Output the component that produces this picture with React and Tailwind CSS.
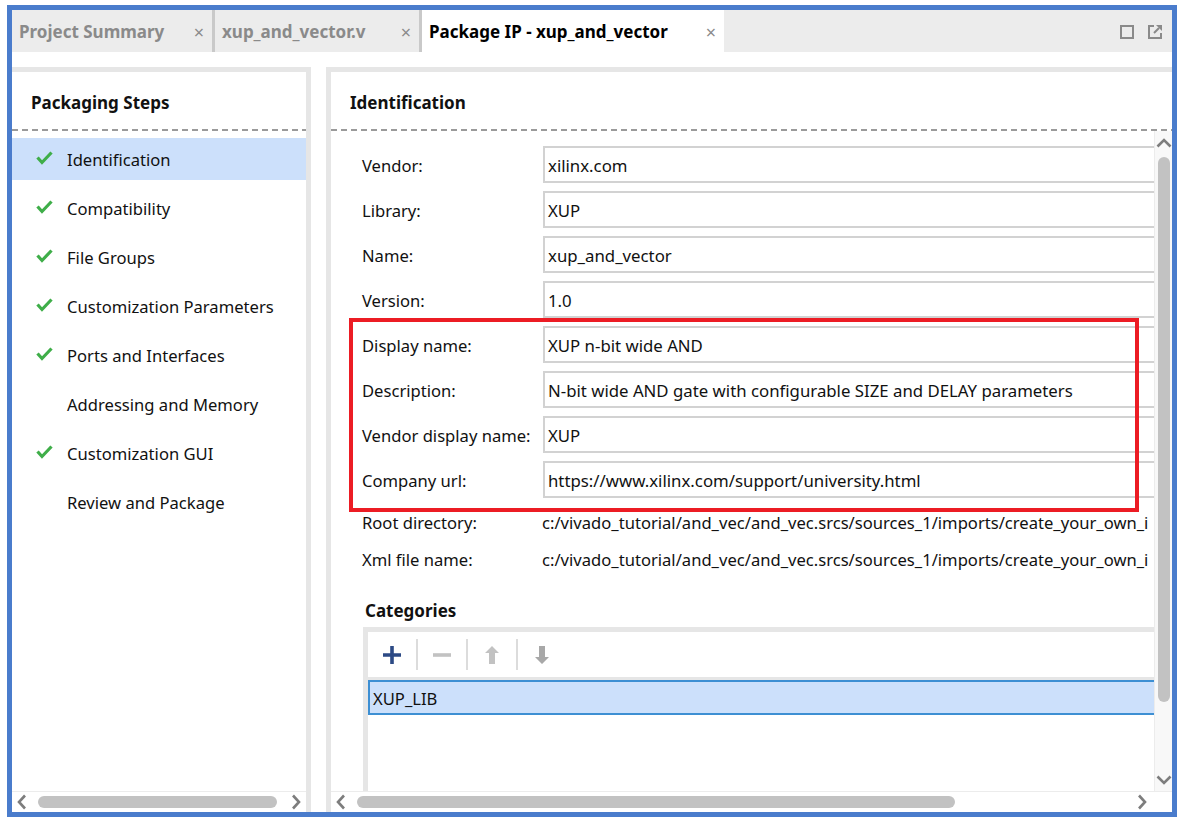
import React from "react";

const FONT = { fontFamily: '"Noto Sans", "Open Sans", sans-serif' };

function Check() {
  return (
    <svg width="17" height="14" viewBox="0 0 17 14" className="shrink-0">
      <path d="M1.5 6.5 L6 11.5 L15.5 1.5" fill="none" stroke="#3fae49" strokeWidth="3.2" strokeLinecap="butt" strokeLinejoin="miter" />
    </svg>
  );
}

function ChevronLeft() {
  return (
    <svg width="10" height="16" viewBox="0 0 10 16">
      <path d="M8 1.5 L2 8 L8 14.5" fill="none" stroke="#7d7d7d" strokeWidth="2.6" />
    </svg>
  );
}
function ChevronRight() {
  return (
    <svg width="10" height="16" viewBox="0 0 10 16">
      <path d="M2 1.5 L8 8 L2 14.5" fill="none" stroke="#7d7d7d" strokeWidth="2.6" />
    </svg>
  );
}
function ChevronUp() {
  return (
    <svg width="16" height="10" viewBox="0 0 16 10">
      <path d="M1.5 8.5 L8 2 L14.5 8.5" fill="none" stroke="#7d7d7d" strokeWidth="2.6" />
    </svg>
  );
}
function ChevronDown() {
  return (
    <svg width="16" height="10" viewBox="0 0 16 10">
      <path d="M1.5 1.5 L8 8 L14.5 1.5" fill="none" stroke="#7d7d7d" strokeWidth="2.6" />
    </svg>
  );
}

function Tab({ label, active, width }) {
  return (
    <div
      className={
        "h-full flex items-center shrink-0 pl-[7px] pr-[8px] pt-[2px] justify-between " +
        (active ? "bg-white text-black" : "text-[#8a8a8a]")
      }
      style={{ width }}
    >
      <span className="font-bold text-[17px] whitespace-nowrap">{label}</span>
      <span className="text-[#8a8a8a] text-[18px] leading-none">×</span>
    </div>
  );
}

const steps = [
  ["Identification", true, true],
  ["Compatibility", true, false],
  ["File Groups", true, false],
  ["Customization Parameters", true, false],
  ["Ports and Interfaces", true, false],
  ["Addressing and Memory", false, false],
  ["Customization GUI", true, false],
  ["Review and Package", false, false],
];

const fields = [
  ["Vendor:", "xilinx.com"],
  ["Library:", "XUP"],
  ["Name:", "xup_and_vector"],
  ["Version:", "1.0"],
  ["Display name:", "XUP n-bit wide AND"],
  ["Description:", "N-bit wide AND gate with configurable SIZE and DELAY parameters"],
  ["Vendor display name:", "XUP"],
  ["Company url:", "https://www.xilinx.com/support/university.html"],
];

const rootDir = "c:/vivado_tutorial/and_vec/and_vec.srcs/sources_1/imports/create_your_own_i";
const xmlFile = "c:/vivado_tutorial/and_vec/and_vec.srcs/sources_1/imports/create_your_own_i";

function Dashed() {
  return <div className="h-[2px] shrink-0 bg-[repeating-linear-gradient(90deg,#9a9a9a_0_6px,transparent_6px_10px)]" />;
}

export default function App() {
  return (
    <div className="w-[1180px] h-[823px] bg-white relative overflow-hidden text-[#111]" style={FONT}>
      <div className="ml-[7px] mt-[5px] w-[1170px] h-[812px] border-[5px] border-[#4a7ccc] flex flex-col bg-white">
        {/* Tab bar */}
        <div className="h-[42px] shrink-0 bg-[#ececec] flex items-stretch">
          <Tab label="Project Summary" width={200} />
          <div className="w-[3px] bg-[#c9c9c9] shrink-0" />
          <Tab label="xup_and_vector.v" width={204} />
          <div className="w-[3px] bg-[#c9c9c9] shrink-0" />
          <Tab label="Package IP - xup_and_vector" active width={302} />
          <div className="flex-1 flex items-center justify-end gap-[14px] pr-[10px] pt-[2px]">
            <svg width="14" height="14" viewBox="0 0 14 14">
              <rect x="1" y="1" width="12" height="12" fill="none" stroke="#8a8a8a" strokeWidth="2" />
            </svg>
            <svg width="14" height="14" viewBox="0 0 14 14">
              <path d="M6 1 H1 V13 H13 V8" fill="none" stroke="#8a8a8a" strokeWidth="2" />
              <path d="M6 8 L11 3" fill="none" stroke="#8a8a8a" strokeWidth="2" />
              <path d="M8 0 H14 V6 Z" fill="#8a8a8a" />
            </svg>
          </div>
        </div>
        <div className="h-[15px] shrink-0" />
        {/* Main */}
        <div className="flex-1 flex min-h-0">
          {/* Left panel */}
          <div className="w-[299px] shrink-0 border-t-[5px] border-r-[5px] border-[#e6e6e6] flex flex-col">
            <div className="h-[57px] shrink-0 flex items-center pl-[19px] pt-[4px]">
              <span className="font-bold text-[17px]">Packaging Steps</span>
            </div>
            <Dashed />
            <div className="flex flex-col gap-[7px] pt-[7px]">
              {steps.map(([name, done, sel]) => (
                <div
                  key={name}
                  className={"h-[42px] flex items-center " + (sel ? "bg-[#cce0fb]" : "")}
                >
                  <div className="w-[55px] pl-[24px] flex items-center pb-[3px]">{done && <Check />}</div>
                  <span className="text-[16.6px] whitespace-nowrap pt-[3px]">{name}</span>
                </div>
              ))}
            </div>
            <div className="flex-1" />
            <div className="h-[21px] shrink-0 border-t border-[#ececec] flex items-center justify-between px-[5px] relative">
              <ChevronLeft />
              <div className="absolute left-[26px] top-[4px] w-[239px] h-[12px] rounded-full bg-[#c2c2c2]" />
              <ChevronRight />
            </div>
          </div>
          <div className="w-[15px] shrink-0" />
          {/* Right panel */}
          <div className="flex-1 min-w-0 border-t-[5px] border-l-[5px] border-[#e6e6e6] flex flex-col">
            <div className="h-[57px] shrink-0 flex items-center pl-[19px] pt-[4px]">
              <span className="font-bold text-[17px]">Identification</span>
            </div>
            <Dashed />
            <div className="flex-1 min-h-0 flex">
              {/* form area */}
              <div className="flex-1 min-w-0 overflow-hidden flex flex-col pl-[31px] pt-[15px]">
                <div className="flex flex-col gap-[8px]">
                  {fields.map(([label, value]) => (
                    <div key={label} className="flex items-center h-[37px] shrink-0">
                      <div className="w-[181px] shrink-0 text-[16.6px] whitespace-nowrap pt-[3px]">{label}</div>
                      <div className="flex-1 h-full border-2 border-r-0 border-[#d2d2d2] flex items-center pl-[3px] pt-[3px] text-[16.8px] whitespace-nowrap overflow-hidden">
                        {value}
                      </div>
                    </div>
                  ))}
                </div>
                <div className="mt-[6px] flex flex-col">
                  {[
                    ["Root directory:", rootDir],
                    ["Xml file name:", xmlFile],
                  ].map(([l, v]) => (
                    <div key={l} className="h-[37px] flex items-center shrink-0 pt-[2px]">
                      <div className="w-[180px] shrink-0 text-[16.6px] whitespace-nowrap">{l}</div>
                      <div className="text-[16.6px] whitespace-nowrap">{v}</div>
                    </div>
                  ))}
                </div>
                <div className="mt-[20px] h-[24px] flex items-center pl-[3px] pt-[2px] shrink-0">
                  <span className="font-bold text-[17px]">Categories</span>
                </div>
                <div className="mt-[5px] ml-[1px] flex-1 border-t-[5px] border-l-[5px] border-[#e6e6e6] flex flex-col">
                  <div className="h-[45px] shrink-0 flex items-center">
                    <div className="w-[48px] flex justify-center">
                      <svg width="20" height="20" viewBox="0 0 20 20">
                        <path d="M10 1 V19 M1 10 H19" stroke="#2c4a85" strokeWidth="3.6" />
                      </svg>
                    </div>
                    <div className="w-[2px] h-[31px] bg-[#dcdcdc]" />
                    <div className="w-[48px] flex justify-center">
                      <svg width="20" height="20" viewBox="0 0 20 20">
                        <path d="M1 10 H19" stroke="#c2c2c2" strokeWidth="3.6" />
                      </svg>
                    </div>
                    <div className="w-[2px] h-[31px] bg-[#dcdcdc]" />
                    <div className="w-[48px] flex justify-center">
                      <svg width="14" height="18" viewBox="0 0 14 18">
                        <path d="M7 0 L14 7 H10 V18 H4 V7 H0 Z" fill="#c2c2c2" />
                      </svg>
                    </div>
                    <div className="w-[2px] h-[31px] bg-[#dcdcdc]" />
                    <div className="w-[48px] flex justify-center">
                      <svg width="14" height="18" viewBox="0 0 14 18">
                        <path d="M7 18 L14 11 H10 V0 H4 V11 H0 Z" fill="#a8a8a8" />
                      </svg>
                    </div>
                  </div>
                  <div className="h-[3px] bg-[#e6e6e6] shrink-0" />
                  <div className="h-[35px] shrink-0 bg-[#cce0fb] border-2 border-r-0 border-[#3d8fd3] flex items-center pl-[3px] pt-[3px] text-[16.6px]">
                    XUP_LIB
                  </div>
                </div>
              </div>
              {/* vertical scrollbar */}
              <div className="w-[18px] shrink-0 bg-[#f8f8f8] border-l border-[#ececec] flex flex-col items-center">
                <div className="h-[22px] flex items-center justify-center pt-[2px]">
                  <ChevronUp />
                </div>
                <div className="mt-[4px] w-[12px] h-[545px] rounded-full bg-[#c2c2c2]" />
                <div className="flex-1" />
                <div className="h-[22px] flex items-center justify-center">
                  <ChevronDown />
                </div>
              </div>
            </div>
            <div className="h-[21px] shrink-0 border-t border-[#ececec] flex items-center relative pl-[5px]">
              <ChevronLeft />
              <div className="absolute left-[26px] top-[4px] w-[598px] h-[12px] rounded-full bg-[#c2c2c2]" />
              <div className="absolute left-[806px] top-[2px]">
                <ChevronRight />
              </div>
            </div>
          </div>
        </div>
      </div>
      {/* red annotation box */}
      <div className="absolute left-[349px] top-[318px] w-[790px] h-[194px] border-4 border-[#ec1c24] pointer-events-none" />
    </div>
  );
}
